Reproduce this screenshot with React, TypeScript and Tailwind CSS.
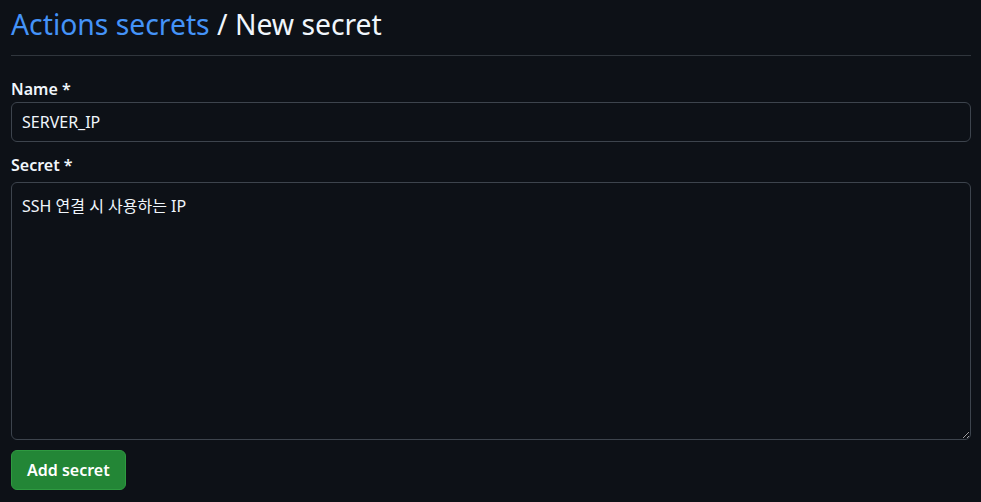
export default function App() {
  return (
    <div
      className="min-h-[502px] bg-[#0d1117] px-[11px] pr-[10px] text-[#f0f6fc]"
      style={{ fontFamily: '"Noto Sans", "Noto Sans CJK KR", sans-serif' }}
    >
      <div className="border-b border-[#30363d] pt-[4px] pb-[11px]">
        <h1 className="text-[28.3px] leading-[40px] font-normal">
          <a className="text-[#4493f8]">Actions secrets</a> / New secret
        </h1>
      </div>
      <form className="pt-[23px]">
        <label className="block text-[16px] font-semibold leading-[24px] mb-[1px] mt-[-2px]">Name *</label>
        <input
          className="block w-full h-[40px] rounded-[6px] border border-[#3d444d] bg-[#0d1117] px-[10px] text-[16px] text-[#f0f6fc] outline-none"
          defaultValue="SERVER_IP"
        />
        <label className="block text-[16px] font-semibold leading-[24px] mt-[11px] mb-[5px]">Secret *</label>
        <textarea
          className="block w-full h-[258px] rounded-[6px] border border-[#3d444d] bg-[#0d1117] px-[10px] py-[11px] text-[16px] leading-[24px] text-[#f0f6fc] outline-none"
          defaultValue="SSH 연결 시 사용하는 IP"
        />
        <button
          type="button"
          className="mt-[10px] h-[40px] rounded-[6px] border border-[#2e9a40] bg-[#238636] px-[15px] text-[16px] font-semibold text-white"
        >
          Add secret
        </button>
      </form>
    </div>
  );
}
